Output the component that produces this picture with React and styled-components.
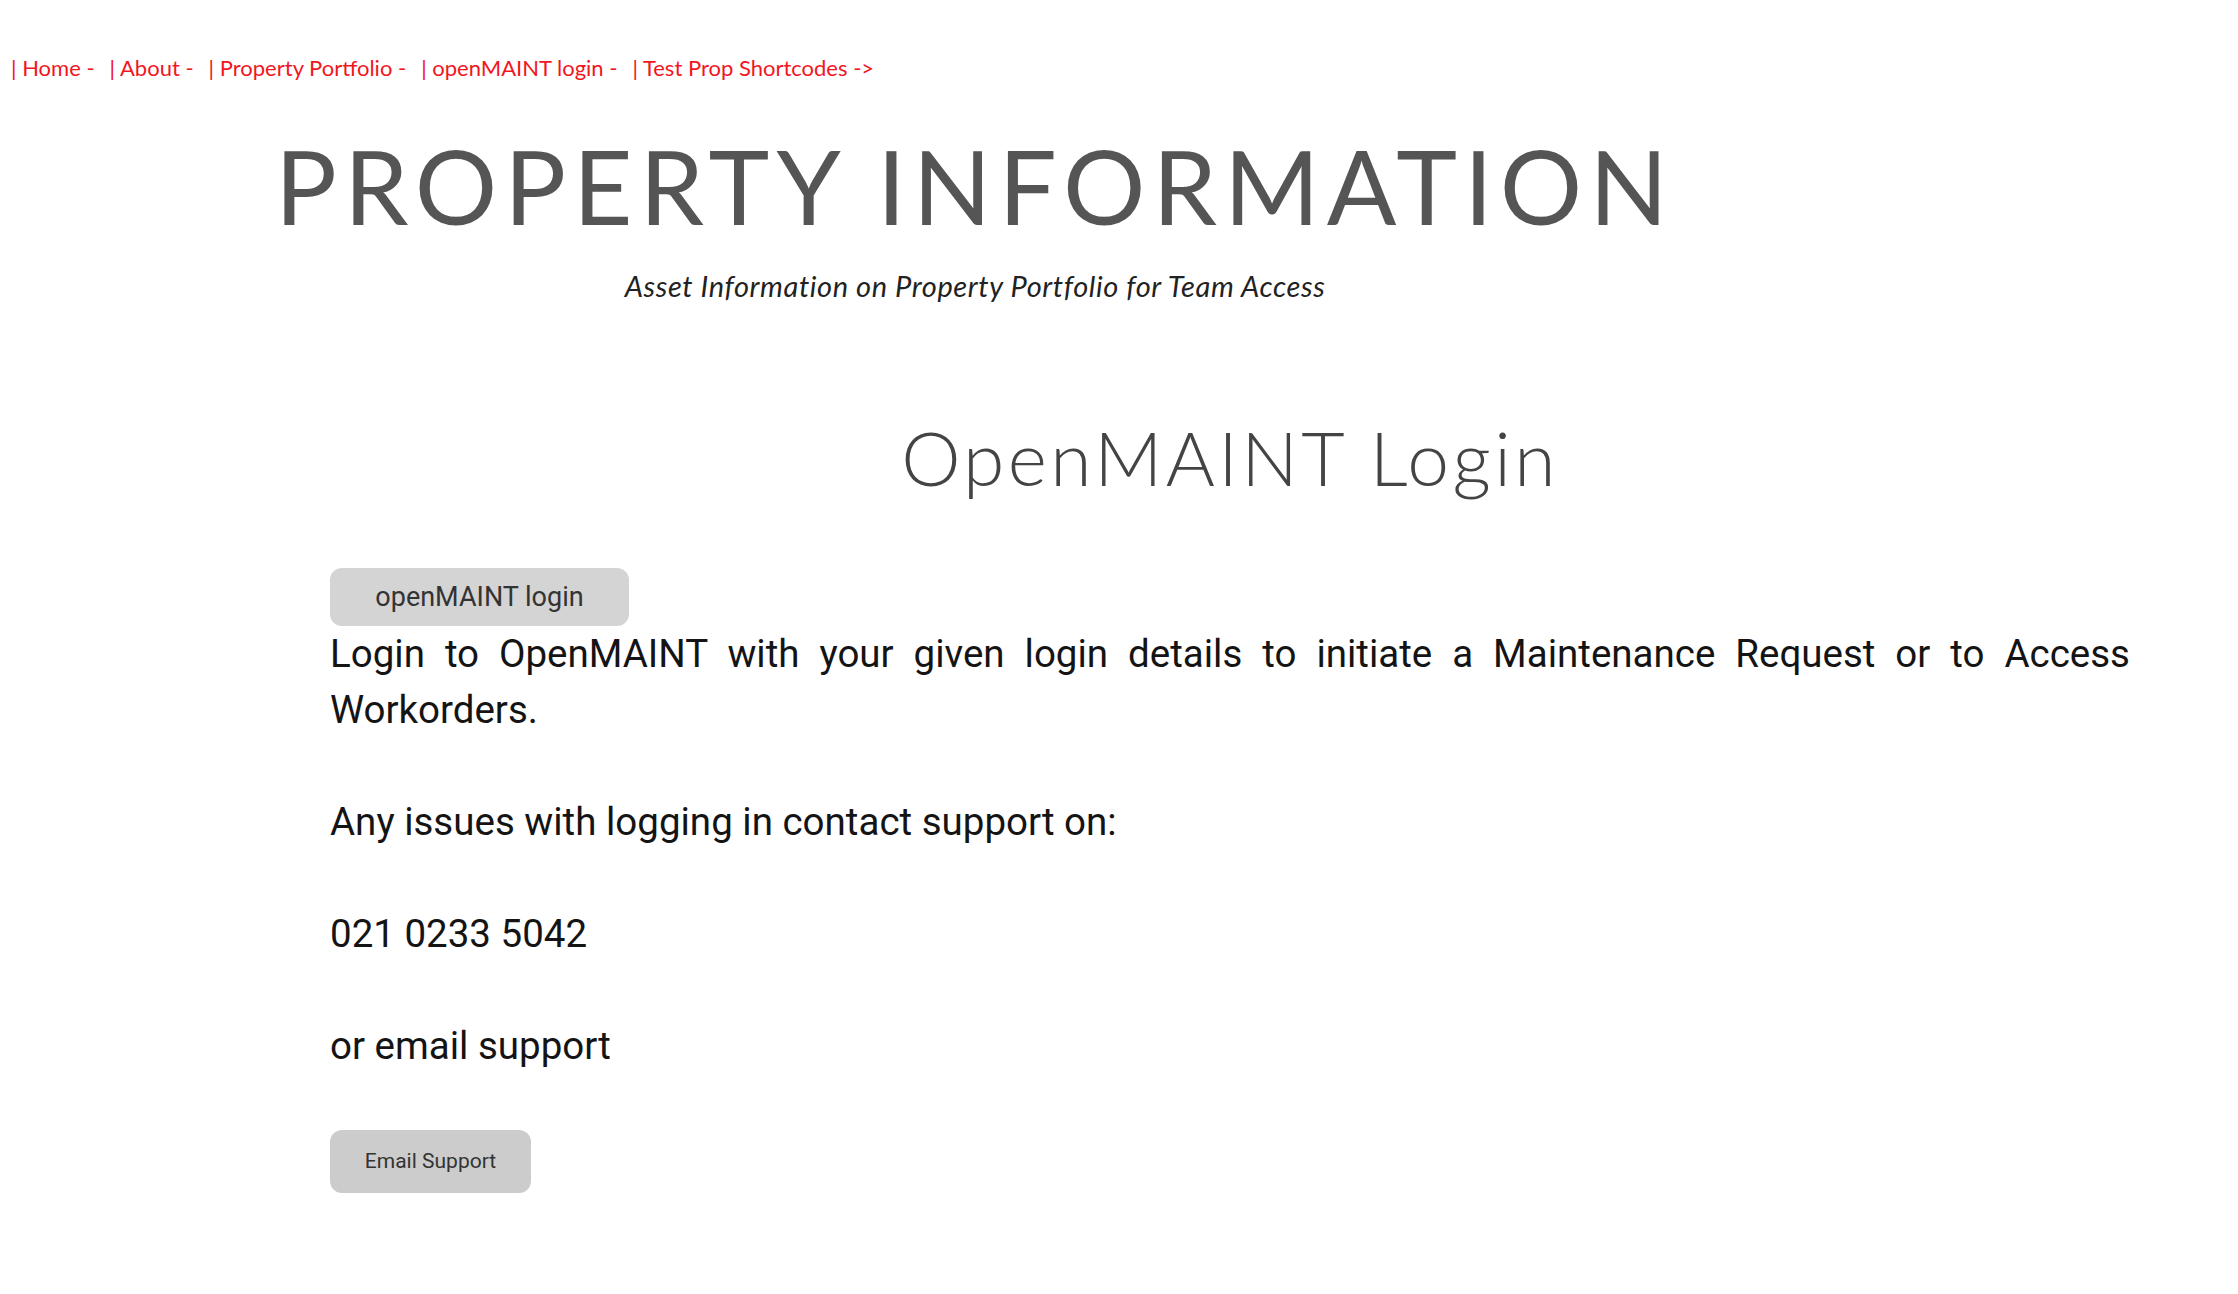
import React from 'react';
import styled, { createGlobalStyle } from 'styled-components';

const GlobalStyle = createGlobalStyle`
    html, body {
        margin: 0;
        padding: 0;
        background: #ffffff;
    }
`;

const Page = styled.div`
    width: 2238px;
    min-height: 1294px;
    padding-top: 53px;
    box-sizing: border-box;
`;

const Nav = styled.nav`
    display: flex;
    gap: 15px;
    padding-left: 11px;
    font-family: 'Lato', 'Liberation Sans', sans-serif;
    font-weight: 400;
    font-size: 22px;
    line-height: 30px;
    color: #f2161e;
`;

const NavLink = styled.a`
    color: inherit;
    text-decoration: none;
    white-space: pre;
`;

const Header = styled.header`
    width: 1950px;
    text-align: center;
    margin-top: 41px;
`;

const Title = styled.h1`
    margin: 0;
    font-family: 'Lato', 'Liberation Sans', sans-serif;
    font-weight: 400;
    font-size: 103px;
    line-height: 1.2;
    letter-spacing: 7px;
    color: #555555;
`;

const Tagline = styled.p`
    margin: 20px 0 0;
    font-family: 'Lato', 'Liberation Sans', sans-serif;
    font-style: italic;
    font-size: 29px;
    letter-spacing: 0.6px;
    color: #222222;
`;

const Content = styled.main`
    margin: 0 108px 0 330px;
`;

const PageTitle = styled.h2`
    margin: 109px 0 0;
    text-align: center;
    font-family: 'Lato', 'Liberation Sans', sans-serif;
    font-weight: 300;
    font-size: 75px;
    line-height: 1.2;
    letter-spacing: 3.4px;
    color: #444444;
`;

const Button = styled.a`
    display: inline-flex;
    align-items: center;
    justify-content: center;
    box-sizing: border-box;
    width: ${(p) => p.$width}px;
    height: ${(p) => p.$height}px;
    margin-top: ${(p) => p.$top}px;
    border-radius: 12px;
    background: ${(p) => p.$bg};
    font-family: 'Roboto', 'Liberation Sans', sans-serif;
    font-size: ${(p) => p.$size}px;
    color: #333333;
    text-decoration: none;
`;

const Text = styled.p`
    margin: 0 0 56px;
    font-family: 'Roboto', 'Liberation Sans', sans-serif;
    font-size: 38.5px;
    line-height: 56px;
    color: #141414;
    text-align: ${(p) => (p.$justify ? 'justify' : 'left')};
`;

const links = [
    '| Home -',
    '| About -',
    '| Property Portfolio -',
    '| openMAINT login -',
    '| Test Prop Shortcodes ->',
];

const App = () => (
    <>
        <GlobalStyle />
        <Page>
            <Nav>
                {links.map((l) => (
                    <NavLink key={l} href="#">
                        {l}
                    </NavLink>
                ))}
            </Nav>
            <Header>
                <Title>PROPERTY INFORMATION</Title>
                <Tagline>Asset Information on Property Portfolio for Team Access</Tagline>
            </Header>
            <Content>
                <PageTitle>OpenMAINT Login</PageTitle>
                <Button href="#" $width={299} $height={58} $top={66} $size={27} $bg="#d4d4d4">
                    openMAINT login
                </Button>
                <Text $justify>
                    Login to OpenMAINT with your given login details to initiate a Maintenance
                    Request or to Access Workorders.
                </Text>
                <Text>Any issues with logging in contact support on:</Text>
                <Text>021 0233 5042</Text>
                <Text>or email support</Text>
                <Button href="#" $width={201} $height={63} $top={0} $size={21} $bg="#cccccc">
                    Email Support
                </Button>
            </Content>
        </Page>
    </>
);

export default App;
